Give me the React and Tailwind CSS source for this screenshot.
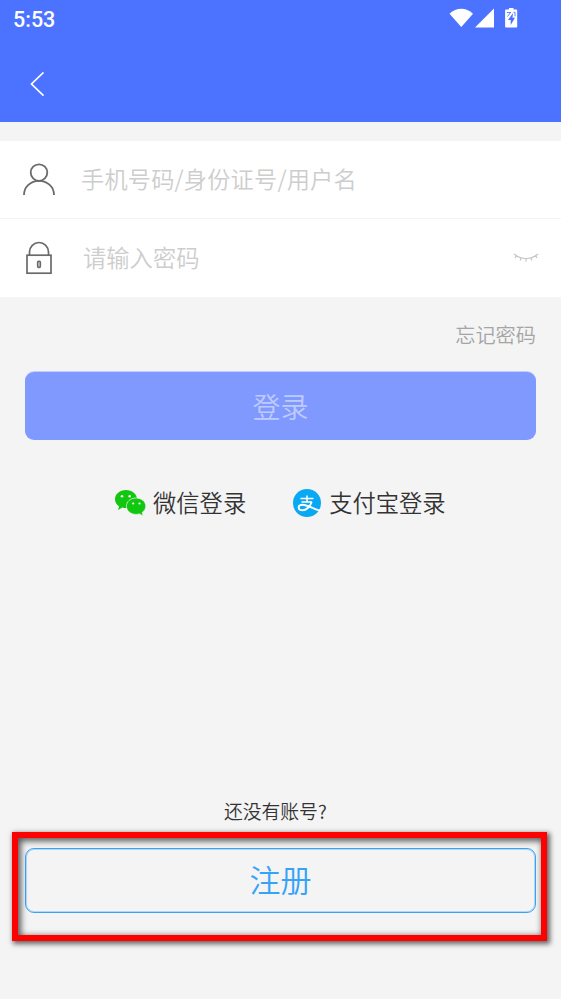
import React, { useState } from "react";

const StatusBar = () => (
  <div className="flex h-10 items-center justify-between pl-[13px] pr-[41px] text-white">
    <span className="font-[Roboto,sans-serif] text-[21.500px] font-medium leading-none">5:53</span>
    <svg width="71" height="22" viewBox="0 0 71 22" fill="currentColor" className="-mt-[3px]">
      <path d="M.5 5.700C7.500-.9 17-.9 24 5.700L12.300 19z" />
      <path d="M45 .500v19H26z" />
      <path
        fillRule="evenodd"
        d="M60 0h4.500v1.500h2.600c.6 0 1.100.500 1.100 1.100V18.400c0 .6-.5 1.100-1.100 1.100h-9.900c-.6 0-1.100-.5-1.100-1.100V2.600c0-.6.5-1.100 1.100-1.100h2.800zM64 5l-5 7h2.700v5l4.300-7.300h-2.500z"
      />
      <path d="M58 4.500h4M61.500 4.500l-3 4M64.500 4.300h1.500v4" fill="none" stroke="#4c73ff" strokeWidth=".9" />
    </svg>
  </div>
);

const UserIcon = () => (
  <svg width="34" height="34" viewBox="0 0 34 34" fill="none" stroke="#6a6a6a" strokeWidth="1.800">
    <circle cx="17" cy="9.600" r="8.300" />
    <path d="M2 32C2 24 8.500 17.900 17 17.900S32 24 32 32" />
  </svg>
);

const LockIcon = () => (
  <svg width="34" height="34" viewBox="0 0 34 34" fill="none" stroke="#6a6a6a" strokeWidth="1.700">
    <path d="M7.500 14V11a9.500 9.500 0 0 1 19 0v3" />
    <rect x="5" y="14.200" width="24" height="18" />
    <rect x="15.700" y="20.300" width="2.600" height="6" rx="1" />
  </svg>
);

const ClosedEyeIcon = () => (
  <svg width="26" height="12" viewBox="0 0 26 12" fill="none" stroke="#c4c4c4" strokeWidth="1.200">
    <path d="M1 2C8.500 8 17.500 8 25 2M3.500 3.500L2 6M8 5.800L7.200 8.500M13 6.500V9.500M18 5.800L18.800 8.500M22.500 3.500L24 6" />
  </svg>
);

const WechatIcon = () => (
  <svg width="31" height="26" viewBox="0 0 31 26" className="mt-[2px]">
    <path fill="#12c70f" d="M11 0C4.900 0 0 4 0 9.200c0 3 1.600 5.500 4.200 7.200L3 20l4.400-2.400c1.200.4 2.400.5 3.600.5C17 18 22 14 22 9S17 0 11 0z" />
    <path
      fill="#12c70f"
      stroke="#f4f4f4"
      strokeWidth=".7"
      d="M21 8c-5.500 0-9.600 3.600-9.600 8.200s4.300 8.200 9.600 8.200c1.200 0 2.400-.2 3.400-.5L28.200 26l-1-3.600c2.200-1.500 3.600-3.700 3.600-6.200C30.800 11.600 26.500 8 21 8z"
    />
    <g fill="#f4f4f4">
      <circle cx="7" cy="6.300" r="1.300" />
      <circle cx="14.700" cy="6.300" r="1.300" />
      <circle cx="18.200" cy="13.500" r="1.100" />
      <circle cx="24.500" cy="13.500" r="1.100" />
    </g>
  </svg>
);

const AlipayIcon = () => (
  <svg width="28" height="28" viewBox="0 0 28 28" className="mt-px">
    <circle cx="14" cy="14" r="14" fill="#08a8f3" />
    <g fill="none" stroke="#fff">
      <path d="M7.500 9.500h13M14 6.500v6.500M8.500 13h10.500" strokeWidth="1.500" />
      <path d="M18.800 12.800C17 18 13 21.300 9.500 21.300c-5.300 0-5-5.600 0-5.600 4.500 0 8.500 3 17.300 6" strokeWidth="1.900" />
    </g>
  </svg>
);

const inputClass =
  "min-w-0 flex-1 bg-transparent pb-[3px] font-[350] leading-[34px] outline-none placeholder:text-[#cdcdcd]";

export default function App() {
  const [account, setAccount] = useState("");
  const [password, setPassword] = useState("");

  return (
    <div className="flex h-[999px] w-[561px] flex-col bg-[#f4f4f4] font-['Noto_Sans_CJK_SC',sans-serif] font-[350] text-[#333]">
      <header className="h-[122px] bg-[#4c73ff]">
        <StatusBar />
        <button type="button" aria-label="返回" className="mt-8 ml-[30px] block text-white">
          <svg width="15" height="25" viewBox="0 0 15 25" fill="none" stroke="currentColor" strokeWidth="1.700">
            <path d="M13.500 .5L1.500 12l12 11.700" />
          </svg>
        </button>
      </header>

      <section className="mt-[19px] bg-white">
        <div className="flex h-[78px] items-center border-b border-[#f4f4f4] pl-[22px] pr-[23px]">
          <UserIcon />
          <input
            value={account}
            onChange={(e) => setAccount(e.target.value)}
            placeholder="手机号码/身份证号/用户名"
            className={`ml-[25px] text-[23.200px] tracking-[0.200px] ${inputClass}`}
          />
        </div>
        <div className="flex h-[78px] items-center pl-[22px] pr-[22px]">
          <LockIcon />
          <input
            type="password"
            value={password}
            onChange={(e) => setPassword(e.target.value)}
            placeholder="请输入密码"
            className={`ml-[27px] text-[23.300px] ${inputClass}`}
          />
          <ClosedEyeIcon />
        </div>
      </section>

      <a className="mt-[23px] mr-[25px] self-end text-[20.200px] leading-[30px] text-[#a5a5a5]">忘记密码</a>

      <button
        type="button"
        className="mx-[25px] mt-[22px] h-[68px] shrink-0 rounded-[9px] bg-[#8099ff] pb-px text-[28px] text-[#bfcbff] shadow-[0_-1px_0_#c3cdfc]"
      >
        登录
      </button>

      <div className="mt-[44px] flex h-9 items-center pl-[115px] text-[23.300px]">
        <button type="button" className="flex items-center gap-[7px]">
          <WechatIcon />
          微信登录
        </button>
        <button type="button" className="ml-[47px] flex items-center gap-2">
          <AlipayIcon />
          支付宝登录
        </button>
      </div>

      <p className="mt-[277px] ml-[224px] text-[18.800px] leading-7">还没有账号?</p>

      {/* highlighted sign-up area */}
      <div className="mt-[7px] mr-[14px] ml-3 h-[109px] border-6 border-[#fe0000] pt-[10px] pr-[5px] pl-[7px] shadow-[2px_2px_5px_1px_rgba(0,0,0,0.6),inset_2px_2px_6px_1px_rgba(0,0,0,0.65)]">
        <button
          type="button"
          className="h-[65px] w-full rounded-[9px] border border-[#36a3f7] pb-[2px] text-[31px] text-[#36a3f7] shadow-[inset_0_0_0_1px_rgba(54,163,247,0.35)]"
        >
          注册
        </button>
      </div>
    </div>
  );
}
